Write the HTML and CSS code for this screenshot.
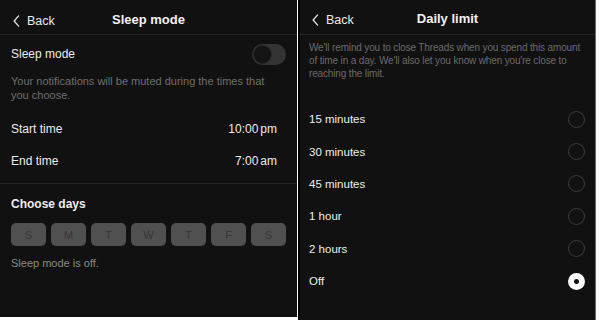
FILE: index.html
```
<!DOCTYPE html>
<html>
<head>
<meta charset="utf-8">
<link rel="stylesheet" href="styles.css">
</head>
<body>
<div class="screens">
  <section class="panel panel-left">
    <header class="nav">
      <span class="back"><svg class="chev" viewBox="0 0 8 14" width="7" height="12"><path d="M6.5 1 L1.2 7 L6.5 13" fill="none" stroke="#eee" stroke-width="1.4" stroke-linecap="round" stroke-linejoin="round"/></svg>Back</span>
      <span class="title">Sleep mode</span>
    </header>
    <div class="row row-toggle">
      <span>Sleep mode</span>
      <span class="toggle"><span class="knob"></span></span>
    </div>
    <p class="desc desc-left">Your notifications will be muted during the times that you choose.</p>
    <div class="times">
      <div class="row row-time"><span>Start time</span><span class="val">10:00<span class="ap">pm</span></span></div>
      <div class="row row-time"><span>End time</span><span class="val">7:00<span class="ap">am</span></span></div>
    </div>
    <div class="days-section">
      <h3 class="days-title">Choose days</h3>
      <div class="days">
        <span class="day">S</span><span class="day">M</span><span class="day">T</span><span class="day">W</span><span class="day">T</span><span class="day">F</span><span class="day">S</span>
      </div>
      <p class="off-note">Sleep mode is off.</p>
    </div>
  </section>
  <section class="panel panel-right">
    <header class="nav">
      <span class="back"><svg class="chev" viewBox="0 0 8 14" width="7" height="12"><path d="M6.5 1 L1.2 7 L6.5 13" fill="none" stroke="#eee" stroke-width="1.4" stroke-linecap="round" stroke-linejoin="round"/></svg>Back</span>
      <span class="title">Daily limit</span>
    </header>
    <p class="desc desc-right">We'll remind you to close Threads when you spend this amount of time in a day. We'll also let you know when you're close to reaching the limit.</p>
    <ul class="options">
      <li class="opt"><span>15 minutes</span><span class="radio"></span></li>
      <li class="opt"><span>30 minutes</span><span class="radio"></span></li>
      <li class="opt"><span>45 minutes</span><span class="radio"></span></li>
      <li class="opt"><span>1 hour</span><span class="radio"></span></li>
      <li class="opt"><span>2 hours</span><span class="radio"></span></li>
      <li class="opt"><span>Off</span><span class="radio on"></span></li>
    </ul>
  </section>
</div>
</body>
</html>
```
FILE: styles.css
```
* { box-sizing: border-box; }
html, body { margin: 0; padding: 0; background: #fff; }
body {
  font-family: "Liberation Sans", Arial, sans-serif;
  color: #ececec;
  -webkit-font-smoothing: antialiased;
}
.screens { display: flex; gap: 1px; align-items: flex-start; }
.panel { background: #111111; }
.panel-left { width: 297px; height: 317px; }
.panel-right {
  width: 298px; height: 320px;
  border-left: 2px solid #000;
  border-right: 1px solid #6a6a6a;
}
.nav {
  position: relative;
  height: 35px;
  border-bottom: 1px solid #242424;
  display: flex;
  align-items: center;
  justify-content: center;
}
.back {
  position: absolute;
  left: 13px;
  top: 14px;
  font-size: 12.5px;
  line-height: 14px;
  display: flex;
  align-items: center;
  gap: 7px;
  color: #ececec;
}
.panel-right .back { left: 12px; top: 13px; }
.title { font-size: 13px; font-weight: 700; color: #f2f2f2; margin-top: 5px; }
.panel-right .title { margin-top: 3px; }
.row {
  display: flex;
  justify-content: space-between;
  align-items: center;
  padding: 0 11px;
  font-size: 12px;
}
.row-toggle { height: 38px; padding-right: 11px; }
.toggle {
  width: 34px; height: 21px;
  border-radius: 11px;
  background: #343434;
  position: relative;
  display: block;
}
.knob {
  position: absolute; left: 1px; top: 1px;
  width: 19px; height: 19px; border-radius: 50%;
  background: #141414;
  border: 1px solid #262626;
}
.desc {
  margin: 0;
  color: #6f6f6f;
  font-size: 11px;
  line-height: 14px;
}
.desc-left { padding: 1px 30px 0 11px; height: 40px; }
.times { border-bottom: 1px solid #232323; padding-bottom: 6px; }
.row-time { height: 32px; padding-right: 20px; }
.val { font-size: 12px; }
.ap { margin-left: 2px; }
.days-section { padding: 12px 11px 0; }
.days-title { margin: 0; font-size: 12px; font-weight: 700; line-height: 16px; color: #ececec; }
.days {
  display: grid;
  grid-template-columns: repeat(7, 1fr);
  gap: 5px;
  margin-top: 11px;
}
.day {
  height: 23px;
  border-radius: 5px;
  background: #505050;
  color: #363636;
  font-size: 11px;
  display: flex; align-items: center; justify-content: center;
}
.off-note { margin: 10px 0 0; font-size: 11px; color: #8a8a8a; line-height: 14px; }
.desc-right { padding: 6px 10px 0 9px; font-size: 10px; letter-spacing: -0.15px; line-height: 13px; color: #6a6a6a; height: 68px; }
.options { list-style: none; margin: 0; padding: 0; }
.opt {
  display: flex; justify-content: space-between; align-items: center;
  height: 32.4px;
  padding: 0 10px 0 9px;
  font-size: 11.5px;
  color: #eeeeee;
}
.radio {
  width: 17px; height: 17px; border-radius: 50%;
  border: 1.2px solid #3d3d3d;
  display: block;
}
.radio.on {
  background: #fff; border: none;
  position: relative;
}
.radio.on::after {
  content: ""; position: absolute; left: 6px; top: 6px;
  width: 5px; height: 5px; border-radius: 50%; background: #111;
}
```
